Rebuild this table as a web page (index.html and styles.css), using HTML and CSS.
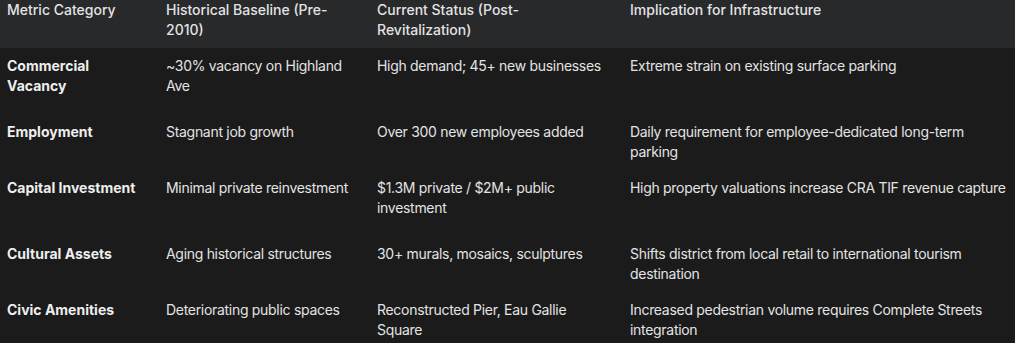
FILE: index.html
```html
<!DOCTYPE html>
<html lang="en">
<head>
<meta charset="utf-8">
<title>Metrics</title>
<link rel="stylesheet" href="styles.css">
</head>
<body>
<div class="table">
  <div class="row head">
    <div class="cell">Metric Category</div>
    <div class="cell">Historical Baseline (Pre-2010)</div>
    <div class="cell">Current Status (Post-Revitalization)</div>
    <div class="cell">Implication for Infrastructure</div>
  </div>
  <div class="row tall">
    <div class="cell key">Commercial Vacancy</div>
    <div class="cell">~30% vacancy on Highland Ave</div>
    <div class="cell">High demand; 45+ new businesses</div>
    <div class="cell">Extreme strain on existing surface parking</div>
  </div>
  <div class="row">
    <div class="cell key">Employment</div>
    <div class="cell">Stagnant job growth</div>
    <div class="cell">Over 300 new employees added</div>
    <div class="cell">Daily requirement for employee-dedicated long-term parking</div>
  </div>
  <div class="row tall">
    <div class="cell key">Capital Investment</div>
    <div class="cell">Minimal private reinvestment</div>
    <div class="cell">$1.3M private / $2M+ public investment</div>
    <div class="cell">High property valuations increase CRA TIF revenue capture</div>
  </div>
  <div class="row">
    <div class="cell key">Cultural Assets</div>
    <div class="cell">Aging historical structures</div>
    <div class="cell">30+ murals, mosaics, sculptures</div>
    <div class="cell">Shifts district from local retail to international tourism destination</div>
  </div>
  <div class="row">
    <div class="cell key">Civic Amenities</div>
    <div class="cell">Deteriorating public spaces</div>
    <div class="cell">Reconstructed Pier, Eau Gallie Square</div>
    <div class="cell">Increased pedestrian volume requires Complete Streets integration</div>
  </div>
</div>
</body>
</html>
```
FILE: styles.css
```css
html, body {
  margin: 0;
  padding: 0;
  background: #1b1b1b;
}
body {
  font-family: Inter, "Noto Sans", sans-serif;
  font-size: 14px;
  line-height: 20px;
  color: #e3e3e3;
  overflow: hidden;
}
.table {
  margin-top: -8px;
  width: 1030px;
}
.row {
  display: grid;
  grid-template-columns: 159px 211px 253px 401px;
  padding: 8px 0;
  letter-spacing: -0.3px;
}
.row.head {
  background: #28292b;
  padding: 8px 0;
  font-weight: 500;
  letter-spacing: 0;
}
.row.tall {
  padding-bottom: 18px;
}
.cell {
  padding: 0 16px 0 7px;
}
.key {
  font-weight: 700;
  color: #eeeeee;
  letter-spacing: 0;
}
```
